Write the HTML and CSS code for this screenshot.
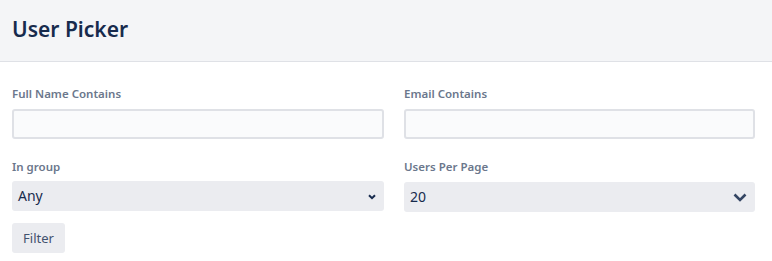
FILE: index.html
```html
<!DOCTYPE html>
<html>
<head>
<meta charset="utf-8">
<link rel="stylesheet" href="styles.css">
</head>
<body>
<header class="page-header">
  <h1 class="title">User Picker</h1>
</header>
<form class="filters">
  <div class="grid">
    <div class="field">
      <label class="label">Full Name Contains</label>
      <input class="text-input" type="text">
    </div>
    <div class="field">
      <label class="label">Email Contains</label>
      <input class="text-input" type="text">
    </div>
    <div class="field">
      <label class="label">In group</label>
      <div class="select-wrap">
        <div class="select">Any</div>
        <svg class="chev chev-small" width="8" height="6" viewBox="0 0 8 6"><path d="M1 1.2 L4 4.2 L7 1.2" fill="none" stroke="#172b4d" stroke-width="2"/></svg>
      </div>
    </div>
    <div class="field field-right">
      <label class="label">Users Per Page</label>
      <div class="select-wrap">
        <div class="select">20</div>
        <svg class="chev chev-big" width="14" height="9" viewBox="0 0 14 9"><path d="M1.5 1.5 L7 7 L12.5 1.5" fill="none" stroke="#344563" stroke-width="2.6"/></svg>
      </div>
    </div>
  </div>
  <button class="btn" type="button">Filter</button>
</form>
</body>
</html>
```
FILE: styles.css
```css
html, body {
  margin: 0;
  padding: 0;
  background: #ffffff;
  font-family: "Noto Sans", "Open Sans", sans-serif;
  color: #172b4d;
}
.page-header {
  height: 61px;
  background: #f4f5f7;
  border-bottom: 1px solid #dfe1e6;
  display: flex;
  align-items: center;
  padding-left: 12px;
}
.title {
  margin: 0;
  font-size: 21px;
  font-weight: 600;
  color: #172b4d;
  line-height: 28px;
  margin-top: -4px;
}
.filters {
  padding: 24px 0 0 12px;
}
.grid {
  display: grid;
  grid-template-columns: 372px 351px;
  column-gap: 20px;
  row-gap: 20px;
}
.field {
  display: flex;
  flex-direction: column;
}
.field-right .select-wrap {
  margin-top: 1px;
}
.label {
  font-size: 11.5px;
  font-weight: 600;
  line-height: 16px;
  color: #6b778c;
  margin-bottom: 7px;
  padding-top: 1px;
  margin-top: -1px;
}
.field:nth-child(n+3) .label {
  margin-bottom: 6px;
}
.text-input {
  box-sizing: border-box;
  height: 30px;
  width: 100%;
  margin: 0;
  border: 2px solid #dfe1e6;
  border-radius: 3px;
  background: #fafbfc;
  padding: 0 6px;
  font: inherit;
}
.select-wrap {
  position: relative;
  height: 30px;
}
.select {
  box-sizing: border-box;
  height: 30px;
  background: #ebecf0;
  border-radius: 3px;
  padding: 0 6px;
  font-size: 14px;
  line-height: 30px;
  color: #172b4d;
}
.chev {
  position: absolute;
  top: 50%;
}
.chev-small {
  right: 8px;
  margin-top: -2px;
}
.chev-big {
  right: 8px;
  margin-top: -4px;
}
.btn {
  margin-top: 11px;
  height: 30px;
  width: 53px;
  border: none;
  border-radius: 3px;
  background: #ebecf0;
  color: #42526e;
  font-family: inherit;
  font-size: 13px;
  padding: 0;
}
```
